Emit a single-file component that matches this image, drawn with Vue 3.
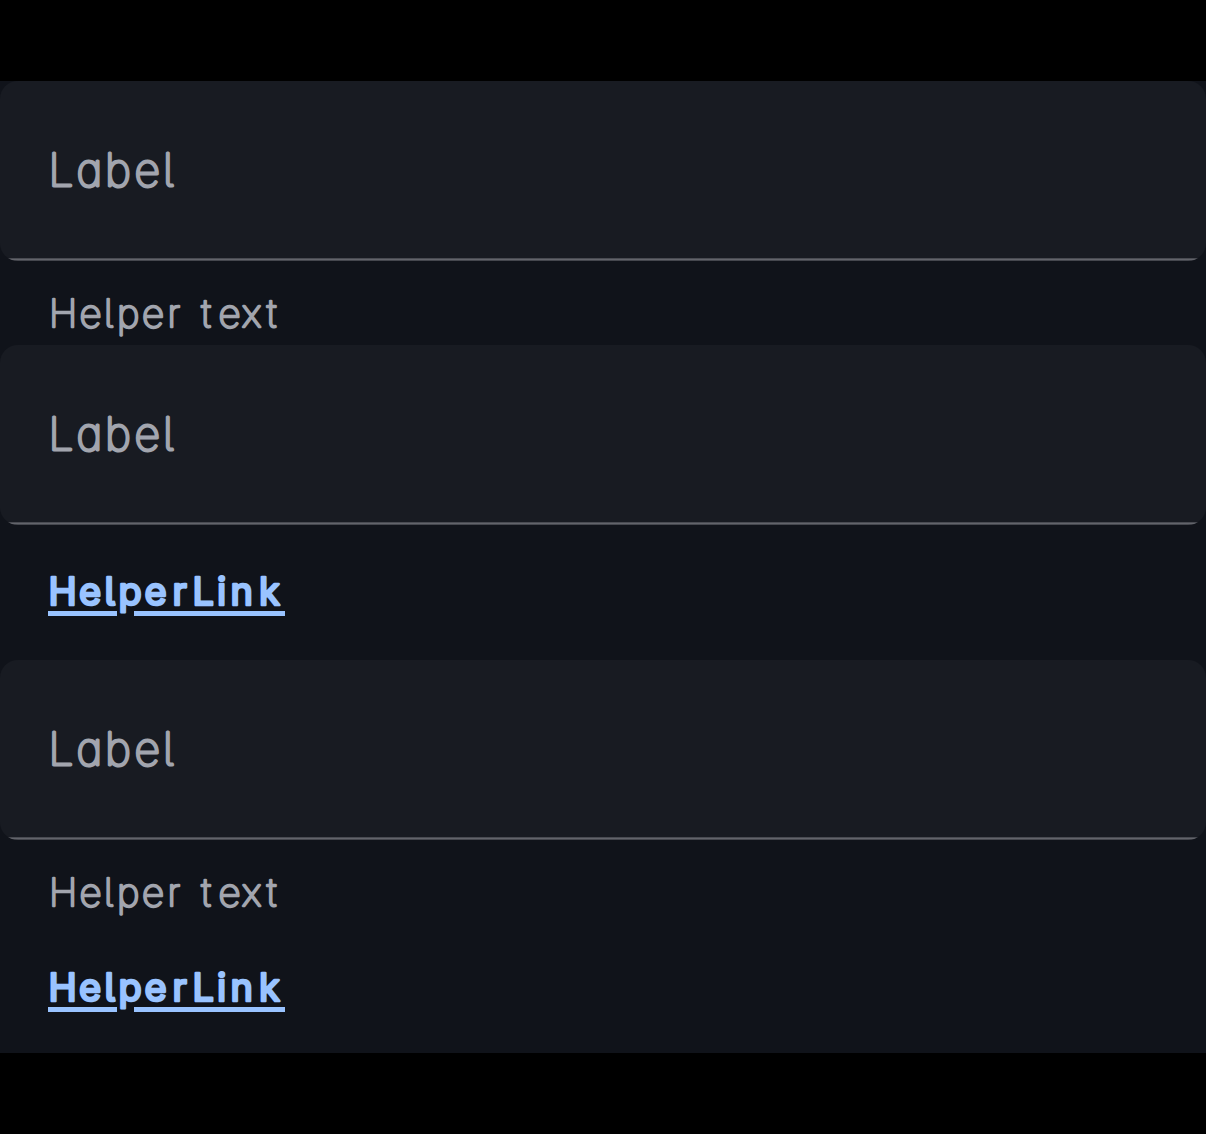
<script setup>
const label = { text: 'Label', x: '48.5 76.5 105 134.5 163' }
const helper = { text: 'Helper text', x: '49 79.5 104 117 142 167.5 186 201.5 218.5 242 267' }
const link = { text: 'HelperLink', x: '48.5 79 104.5 118.5 144.5 172.5 192.5 217 230.5 259' }

const fields = [
  { helper: true, link: false },
  { helper: false, link: true },
  { helper: true, link: true },
]
</script>

<template>
  <main class="screen">
    <section class="panel">
      <div v-for="(field, i) in fields" :key="i" class="field">
        <div class="input">
          <svg class="label" width="300" height="177">
            <text :x="label.x" y="105.2">{{ label.text }}</text>
          </svg>
        </div>
        <svg v-if="field.helper" class="helper" width="300" height="84">
          <text :x="helper.x" y="66.3">{{ helper.text }}</text>
        </svg>
        <svg v-if="field.link" class="link" :class="{ compact: field.helper }" width="300" height="129">
          <text :x="link.x" y="80">{{ link.text }}</text>
          <path class="underline" d="M48 88.5H117M134 88.5H285" />
        </svg>
      </div>
    </section>
  </main>
</template>

<style>
body {
  background: #000;
}
</style>

<style scoped>
.screen {
  box-sizing: border-box;
  width: 1206px;
  height: 1134px;
  padding-top: 81px;
  background: #000;
  overflow: hidden;
}
.panel {
  height: 972px;
  background: #10131a;
  overflow: hidden;
}
.field {
  display: flex;
  flex-direction: column;
}
.input {
  box-sizing: border-box;
  height: 180px;
  border-radius: 18px;
  overflow: hidden;
  background: linear-gradient(#494b52 0 1px, #62646b 1px 2px, #45474e 2px 3px) 0 177px / 100% 3px no-repeat, #181b22;
}
svg {
  display: block;
  flex: none;
}
text {
  font-family: Inter, "Noto Sans", sans-serif;
  font-feature-settings: "cv11" 1, "cv05" 1;
  stroke-linejoin: round;
  stroke-linecap: round;
}
.label text {
  font-size: 44.5px;
  font-weight: 100;
  fill: #a2a5ae;
  stroke: #a2a5ae;
  stroke-width: 3px;
}
.helper text {
  font-size: 38.5px;
  font-weight: 100;
  fill: #a2a5ae;
  stroke: #a2a5ae;
  stroke-width: 2.7px;
}
.link {
  margin-bottom: 6px;
}
.link.compact {
  margin-top: -3px;
}
.link text {
  font-size: 38px;
  font-weight: 400;
  fill: #99c3ff;
  stroke: #99c3ff;
  stroke-width: 2.6px;
}
.underline {
  fill: none;
  stroke: #99c3ff;
  stroke-width: 5px;
}
</style>
